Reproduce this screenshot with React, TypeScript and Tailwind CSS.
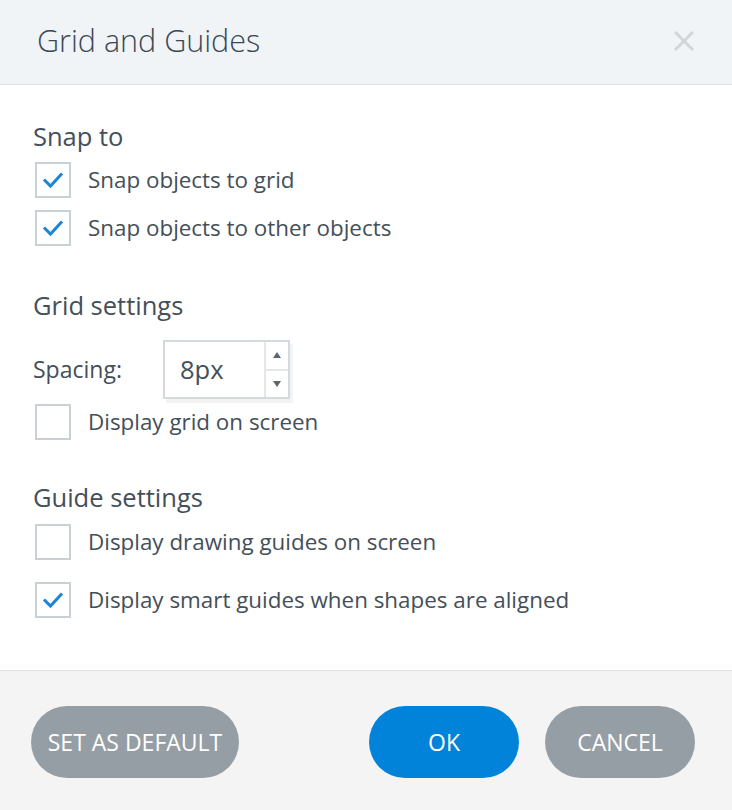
import React from "react";

const font = { fontFamily: '"Open Sans", "Noto Sans", "Liberation Sans", sans-serif' };

function Check() {
  return (
    <svg width="22" height="22" viewBox="0 0 22 22" fill="none">
      <polyline points="3,11.5 8.5,17 19,5.5" stroke="#1b86d8" strokeWidth="3" strokeLinecap="square" strokeLinejoin="miter" />
    </svg>
  );
}

function Box({ checked, label, className = "" }: { checked: boolean; label: string; className?: string }) {
  return (
    <div className={`flex items-center pl-[35px] ${className}`}>
      <div className="w-[36px] h-[36px] border-2 border-[#c9d0d6] bg-white flex items-center justify-center shrink-0">
        {checked && <Check />}
      </div>
      <span className="ml-[17px] text-[22.4px] leading-[30px] text-[#444f59]">{label}</span>
    </div>
  );
}

export default function App() {
  return (
    <div className="w-[732px] h-[810px] flex flex-col bg-white overflow-hidden" style={font}>
      <div className="h-[85px] shrink-0 bg-[#f0f4f7] border-b border-[#dde2e6] flex items-center justify-between pl-[37px] pr-[36px]">
        <span className="text-[30.5px] font-light text-[#3b4854] leading-none pb-[3px]">Grid and Guides</span>
        <svg width="24" height="24" viewBox="0 0 24 24" className="mb-[2px]">
          <path d="M3 3 L21 21 M21 3 L3 21" stroke="#d3d6d9" strokeWidth="3" />
        </svg>
      </div>
      <div className="flex-1 flex flex-col pt-[36px] border-b border-[#dde2e6]">
        <div className="pl-[33px] text-[25.5px] leading-[30px] text-[#444f59]">Snap to</div>
        <Box checked label="Snap objects to grid" className="mt-[11px]" />
        <Box checked label="Snap objects to other objects" className="mt-[12px]" />
        <div className="pl-[33px] mt-[44px] text-[25.5px] leading-[30px] text-[#444f59]">Grid settings</div>
        <div className="flex items-center pl-[33px] mt-[20px]">
          <span className="w-[130px] text-[23px] text-[#444f59]">Spacing:</span>
          <div className="w-[127px] h-[59px] border-2 border-[#d3d9dd] bg-white flex shadow-[3px_4px_0_0_#f1f3f4]">
            <div className="flex-1 flex items-center pl-[15px] text-[25.5px] text-[#444f59]">8px</div>
            <div className="w-[24px] border-l-2 border-[#e3e7ea] flex flex-col">
              <div className="flex-1 flex items-center justify-center border-b-2 border-[#e3e7ea]">
                <svg width="8" height="6" viewBox="0 0 8 6"><polygon points="4,0 8,6 0,6" fill="#5b6670" /></svg>
              </div>
              <div className="flex-1 flex items-center justify-center">
                <svg width="8" height="6" viewBox="0 0 8 6"><polygon points="0,0 8,0 4,6" fill="#5b6670" /></svg>
              </div>
            </div>
          </div>
        </div>
        <Box checked={false} label="Display grid on screen" className="mt-[5px]" />
        <div className="pl-[33px] mt-[42px] text-[25.5px] leading-[30px] text-[#444f59]">Guide settings</div>
        <Box checked={false} label="Display drawing guides on screen" className="mt-[12px]" />
        <Box checked label="Display smart guides when shapes are aligned" className="mt-[22px]" />
      </div>
      <div className="h-[139px] shrink-0 bg-[#f4f4f4] flex items-center pl-[31px] pr-[37px] pt-[3px]">
        <button className="w-[208px] h-[72px] rounded-full bg-[#969ea5] text-white text-[23px]" style={font}>SET AS DEFAULT</button>
        <div className="flex-1" />
        <button className="w-[150px] h-[72px] rounded-full bg-[#0083d9] text-white text-[23px]" style={font}>OK</button>
        <button className="ml-[26px] w-[150px] h-[72px] rounded-full bg-[#969ea5] text-white text-[23px]" style={font}>CANCEL</button>
      </div>
    </div>
  );
}
